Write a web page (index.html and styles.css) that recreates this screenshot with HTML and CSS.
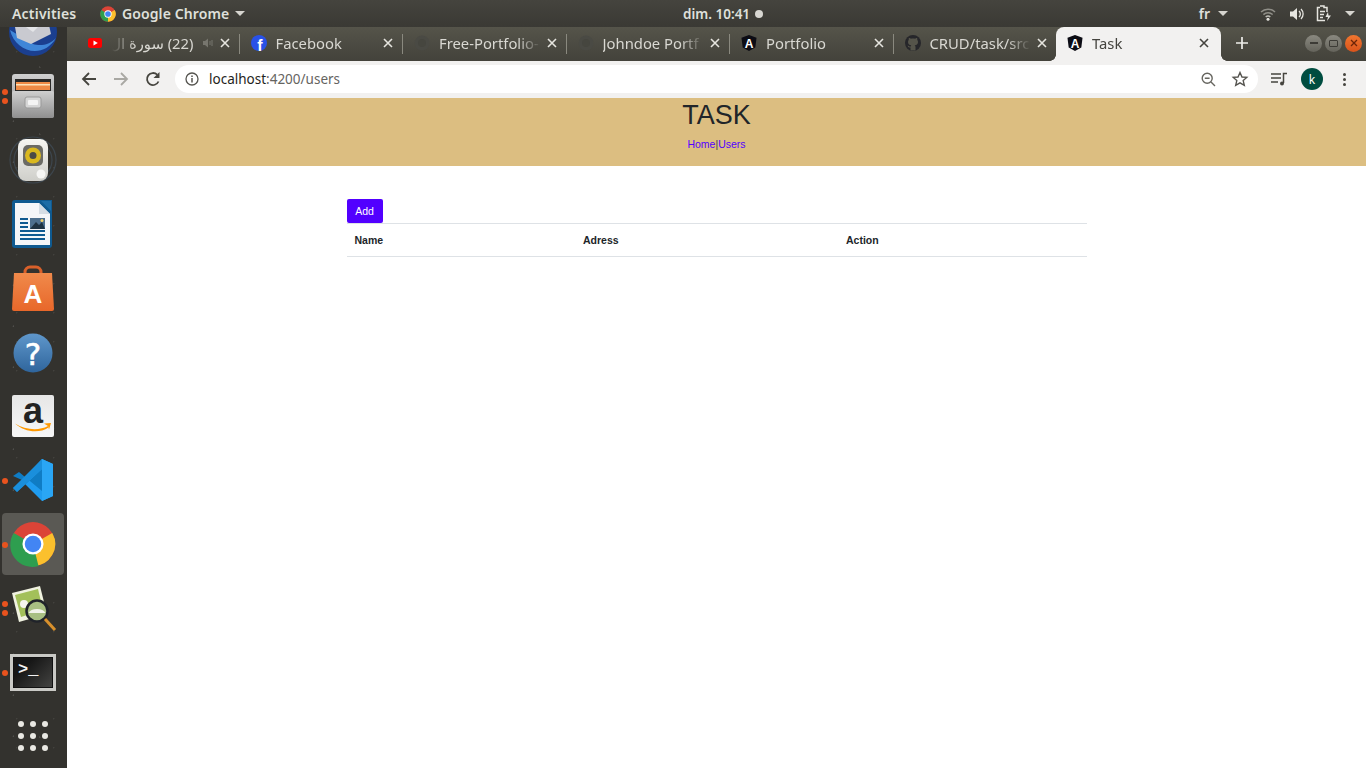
FILE: index.html
```html
<!DOCTYPE html>
<html lang="en">
<head>
  <meta charset="UTF-8">
  <title>Task</title>
  <link rel="stylesheet" href="styles.css">
</head>
<body>
  <svg class="defs" width="0" height="0">
    <defs>
      <linearGradient id="g-cabinet" x1="0" y1="0" x2="0" y2="1">
        <stop offset="0" stop-color="#cfcfcf"/><stop offset="1" stop-color="#8f8f8f"/>
      </linearGradient>
      <linearGradient id="g-bag" x1="0" y1="0" x2="0" y2="1">
        <stop offset="0" stop-color="#f08a4b"/><stop offset="1" stop-color="#e8672a"/>
      </linearGradient>
      <linearGradient id="g-help" x1="0" y1="0" x2="0" y2="1">
        <stop offset="0" stop-color="#5f97cb"/><stop offset="1" stop-color="#2f659c"/>
      </linearGradient>
      <linearGradient id="g-amz" x1="0" y1="0" x2="0" y2="1">
        <stop offset="0" stop-color="#e6e6e6"/><stop offset="1" stop-color="#f7f7f7"/>
      </linearGradient>
      <linearGradient id="g-speaker" x1="0" y1="0" x2="0" y2="1">
        <stop offset="0" stop-color="#f6f6f2"/><stop offset="1" stop-color="#cfcfca"/>
      </linearGradient>
    </defs>
    <symbol id="close" viewBox="0 0 10 10">
      <path d="M1 1 9 9M9 1 1 9" stroke="currentColor" stroke-width="1.6" fill="none"/>
    </symbol>
    <symbol id="blank" viewBox="0 0 16 16">
      <circle cx="8" cy="8" r="7.500" fill="#4a4a44"/>
      <circle cx="8" cy="8" r="4" fill="#46463f"/>
    </symbol>
  </svg>

  <header class="topbar">
    <div class="topbar-left">
      <span class="activities">Activities</span>
      <span class="app-menu">
        <svg width="16" height="16" viewBox="0 0 48 48">
          <circle cx="24" cy="24" r="23" fill="#db4437"/>
          <path d="M24 24 44 12A23 23 0 0 1 24 47Z" fill="#fbc02d"/>
          <path d="M24 24 24 47A23 23 0 0 1 4 12Z" fill="#2e9e4f"/>
          <circle cx="24" cy="24" r="11" fill="#fff"/>
          <circle cx="24" cy="24" r="8.5" fill="#4285f4"/>
        </svg>
        Google Chrome
        <i class="caret"></i>
      </span>
    </div>
    <div class="clock">dim. 10:41 <i class="clock-dot"></i></div>
    <div class="topbar-right">
      <span class="lang">fr <i class="caret"></i></span>
      <svg class="wifi" width="16" height="14" viewBox="0 0 16 14" fill="none" stroke="#8f8e87" stroke-width="1.5">
        <path d="M1 5a10 10 0 0 1 14 0M3.4 7.6a6.6 6.6 0 0 1 9.2 0"/>
        <path d="M5.7 10a3.4 3.4 0 0 1 4.6 0" stroke="#bdbcb5"/>
        <circle cx="8" cy="12.2" r="1.5" fill="#e6e5e0" stroke="none"/>
      </svg>
      <svg class="vol" width="16" height="14" viewBox="0 0 16 14" fill="none">
        <path d="M1 4.5H4L8 1V13L4 9.5H1Z" fill="#e6e5e0"/>
        <path d="M10 4a4 4 0 0 1 0 6M12 2a7 7 0 0 1 0 10" stroke="#e6e5e0" stroke-width="1.3"/>
      </svg>
      <svg class="batt" width="16" height="17" viewBox="0 0 16 17" fill="none">
        <path d="M4 1H8V2.5H11V7M9 15.5H1.5V2.5H4" stroke="#e6e5e0" stroke-width="1.5"/>
        <path d="M4 6.5H9M4 9.5H8M4 12.5H7" stroke="#e6e5e0" stroke-width="1.3"/>
        <path d="M12 7 9.5 12H12L11 16 15 10.5H12.5Z" fill="#e6e5e0"/>
      </svg>
      <i class="caret"></i>
    </div>
  </header>

  <div class="desktop">
    <nav class="dock">
      <div class="dock-item">
        <svg width="48" height="48" viewBox="0 0 48 48">
          <circle cx="24" cy="24" r="24" fill="#1b3f8f"/>
          <path d="M1 22C6 44 34 52 47 30 40 38 30 38 24 36Z" fill="#3f86d8"/>
          <path d="M4 8H38L42 26 22 36 8 30Z" fill="#c9cad0"/>
          <path d="M4 10 24 24 38 10Z" fill="#e4e5e8"/>
        </svg>
      </div>
      <div class="dock-item">
        <i class="pip pip-a"></i><i class="pip pip-b"></i>
        <svg width="44" height="44" viewBox="0 0 44 44">
          <rect x="1" y="0" width="42" height="44" rx="3" fill="url(#g-cabinet)"/>
          <rect x="4" y="5" width="36" height="13" fill="#2b2a28"/>
          <rect x="5" y="8" width="34" height="8" fill="#ee8a45"/>
          <rect x="5" y="10" width="34" height="1.500" fill="#fde1b8"/>
          <rect x="1" y="17" width="42" height="27" rx="2" fill="url(#g-cabinet)"/>
          <rect x="14" y="23" width="16" height="11" rx="2" fill="#d6d6d6" stroke="#9a9a9a"/>
          <rect x="17" y="26" width="10" height="5" rx="1" fill="#f4f4f4"/>
        </svg>
      </div>
      <div class="dock-item">
        <svg width="48" height="48" viewBox="0 0 48 48">
          <g fill="none" stroke="#4f6e8a" stroke-opacity=".35" stroke-width="1.200">
            <circle cx="24" cy="24" r="23"/><circle cx="24" cy="24" r="19"/>
          </g>
          <rect x="9" y="3" width="30" height="42" rx="8" fill="url(#g-speaker)"/>
          <rect x="14" y="9" width="20" height="21" rx="5" fill="#6b6b65"/>
          <circle cx="24" cy="19.500" r="8" fill="#d9b81f"/>
          <circle cx="24" cy="19.500" r="3.500" fill="#4a4a46"/>
          <circle cx="32" cy="38" r="4.500" fill="#f6f6f4"/>
        </svg>
      </div>
      <div class="dock-item">
        <svg width="42" height="48" viewBox="0 0 42 48">
          <path d="M3 0H40V45A3 3 0 0 1 37 48H3A3 3 0 0 1 0 45V3A3 3 0 0 1 3 0Z" fill="#0f5a90"/>
          <path d="M3 3H27L38 14V45H3Z" fill="#f4f6f8"/>
          <path d="M29 1 39 1V11Z" fill="#1d6da6"/>
          <path d="M27 3 38 14H27Z" fill="#d5dde4"/>
          <path d="M8 19h8M8 23h8M8 27h8M8 31h25M8 35h25M8 39h25" stroke="#0f5a90" stroke-width="2"/>
          <rect x="18" y="18" width="15" height="11" fill="#4d6f8d"/>
          <path d="M18 29 24 22 27 25 30 22 33 29Z" fill="#1f3342"/>
          <circle cx="30" cy="20.500" r="1.500" fill="#f2d16b"/>
        </svg>
      </div>
      <div class="dock-item">
        <svg width="44" height="46" viewBox="0 0 44 46">
          <path d="M14 12V7A5 5 0 0 1 19 2H25A5 5 0 0 1 30 7V12" fill="none" stroke="#d9602a" stroke-width="3"/>
          <path d="M3 8H41L43 44A2 2 0 0 1 41 46H3A2 2 0 0 1 1 44Z" fill="url(#g-bag)"/>
          <text x="22" y="38" text-anchor="middle" class="bag-letter">A</text>
        </svg>
      </div>
      <div class="dock-item">
        <svg class="help-ico" width="40" height="40" viewBox="0 0 40 40">
          <circle cx="20" cy="20" r="19.500" fill="url(#g-help)"/>
          <text x="20" y="31.500" text-anchor="middle" class="help-mark">?</text>
        </svg>
      </div>
      <div class="dock-item">
        <svg width="42" height="42" viewBox="0 0 42 42">
          <rect width="42" height="42" rx="2" fill="url(#g-amz)"/>
          <text x="21" y="28" text-anchor="middle" class="amz-letter">a</text>
          <path d="M3 28.500C13 35 27 36 36 31L36.500 32.500C27 39 12 37 3 28.500Z" fill="#f90"/>
          <path d="M32 28.500 39 28 37 34.500 36 31Z" fill="#f90"/>
        </svg>
      </div>
      <div class="dock-item">
        <i class="pip"></i>
        <svg width="42" height="42" viewBox="0 0 42 42">
          <path d="M30 0 41 5V37L30 42 10 22Z" fill="#1f9cf0"/>
          <path d="M30 0 30 42 41 37V5Z" fill="#2aa6f5"/>
          <path d="M30 10 30 32 7 13 1 17 10 21 1 29 5 33 30 10Z" fill="#0f7cc4"/>
          <path d="M30 0 30 10 5 33 1 29Z" fill="#1a8fdc"/>
        </svg>
      </div>
      <div class="dock-item is-active">
        <i class="pip"></i>
        <svg width="44" height="44" viewBox="0 0 48 48">
          <circle cx="24" cy="24" r="24" fill="#db4437"/>
          <path d="M24 24 45 12A24 24 0 0 1 24 48Z" fill="#fbc02d"/>
          <path d="M24 24 30 48A24 24 0 0 1 3 12Z" fill="#2e9e4f"/>
          <circle cx="24" cy="24" r="11.500" fill="#fff"/>
          <circle cx="24" cy="24" r="9" fill="#4285f4"/>
        </svg>
      </div>
      <div class="dock-item">
        <i class="pip pip-a"></i><i class="pip pip-b"></i>
        <svg width="46" height="46" viewBox="0 0 46 46">
          <path d="M2 8 30 1 37 29 9 37Z" fill="#f0f2e0"/>
          <path d="M5 10 28 4 33 25 11 32Z" fill="#a3c05a"/>
          <circle cx="14" cy="19" r="4" fill="#f5f5ee"/>
          <circle cx="27" cy="26" r="10.500" fill="#a8bf82" stroke="#20232a" stroke-width="2.500"/>
          <path d="M18.500 28a9 6 0 0 1 17 0Z" fill="#f2f3ea"/>
          <path d="M35 34 45 45" stroke="#d8902c" stroke-width="3"/>
        </svg>
      </div>
      <div class="dock-item">
        <i class="pip"></i>
        <div class="term-icon"><span class="term-prompt">&gt;_</span></div>
      </div>
      <div class="dock-item">
        <div class="apps-grid">
          <i></i><i></i><i></i><i></i><i></i><i></i><i></i><i></i><i></i>
        </div>
      </div>
    </nav>

    <div class="browser">
      <div class="tabstrip">
        <div class="tab">
          <svg class="fav" width="16" height="16" viewBox="0 0 16 16">
            <rect x="1" y="3" width="14" height="10" rx="2.500" fill="#f00"/>
            <path d="M6.500 5.500V10.500L10.800 8Z" fill="#fff"/>
          </svg>
          <span class="tab-title tab-title-rtl" dir="rtl">(22) سورة ال</span>
          <svg class="speaker" width="12" height="12" viewBox="0 0 12 12" fill="#77766e">
            <path d="M1 4H3L6 1.500V10.500L3 8H1Z"/><path d="M7.500 4v4h1V4ZM9.500 3v6h1V3Z"/>
          </svg>
          <svg class="tab-x" width="10" height="10"><use href="#close"/></svg>
        </div>
        <div class="tab">
          <svg class="fav" width="16" height="16" viewBox="0 0 16 16">
            <circle cx="8" cy="8" r="8" fill="#2851e8"/>
            <text x="8.800" y="16" text-anchor="middle" class="fb-letter">f</text>
          </svg>
          <span class="tab-title">Facebook</span>
          <svg class="tab-x" width="10" height="10"><use href="#close"/></svg>
        </div>
        <div class="tab">
          <svg class="fav" width="16" height="16"><use href="#blank"/></svg>
          <span class="tab-title">Free-Portfolio-</span>
          <svg class="tab-x" width="10" height="10"><use href="#close"/></svg>
        </div>
        <div class="tab">
          <svg class="fav" width="16" height="16"><use href="#blank"/></svg>
          <span class="tab-title">Johndoe Portf</span>
          <svg class="tab-x" width="10" height="10"><use href="#close"/></svg>
        </div>
        <div class="tab">
          <svg class="fav" width="16" height="16" viewBox="0 0 16 16">
            <path d="M8 0 15.5 2.7 14.3 12.5 8 16 1.7 12.5.5 2.7Z" fill="#0c0c14"/>
            <text x="8" y="12.600" text-anchor="middle" class="ng-letter">A</text>
          </svg>
          <span class="tab-title">Portfolio</span>
          <svg class="tab-x" width="10" height="10"><use href="#close"/></svg>
        </div>
        <div class="tab">
          <svg class="fav" width="16" height="16" viewBox="0 0 16 16">
            <circle cx="8" cy="8" r="8" fill="#26262a"/>
            <path d="M5.500 15.500V12.500C3 13 3 11 2.500 10.500 4 10.500 4 12 5.800 11.500 5.800 11 6 10.500 6.300 10.300 4 10 3 8.800 3 7 3 6 3.400 5.300 3.800 4.800 3.600 4.300 3.600 3.500 3.900 2.900 4.800 2.900 5.500 3.400 5.900 3.700 7.200 3.400 8.800 3.400 10.100 3.700 10.500 3.400 11.200 2.900 12.100 2.900 12.400 3.500 12.400 4.300 12.200 4.800 12.600 5.300 13 6 13 7 13 8.800 12 10 9.700 10.300 10.200 10.700 10.500 11.300 10.500 12V15.500Z" fill="#55544a"/>
          </svg>
          <span class="tab-title">CRUD/task/src</span>
          <svg class="tab-x" width="10" height="10"><use href="#close"/></svg>
        </div>
        <div class="tab tab-active">
          <svg class="fav" width="16" height="16" viewBox="0 0 16 16">
            <path d="M8 0 15.5 2.7 14.3 12.5 8 16 1.7 12.5.5 2.7Z" fill="#0c0c14"/>
            <text x="8" y="12.600" text-anchor="middle" class="ng-letter">A</text>
          </svg>
          <span class="tab-title">Task</span>
          <svg class="tab-x" width="10" height="10"><use href="#close"/></svg>
        </div>
        <svg class="new-tab" width="12" height="12" viewBox="0 0 12 12">
          <path d="M6 0V12M0 6H12" stroke="#eeeeea" stroke-width="1.700"/>
        </svg>
        <div class="win-btns">
          <span class="win-btn"><i class="win-min"></i></span>
          <span class="win-btn"><i class="win-max"></i></span>
          <span class="win-btn win-close">
            <svg width="8" height="8" viewBox="0 0 8 8"><path d="M1 1 7 7M7 1 1 7" stroke="#6b2409" stroke-width="1.300"/></svg>
          </span>
        </div>
      </div>

      <div class="toolbar">
        <svg class="tool-ico" width="16" height="16" viewBox="0 0 16 16" fill="none" stroke="#46453f" stroke-width="1.800">
          <path d="M15 8H2M8 2 2 8 8 14"/>
        </svg>
        <svg class="tool-ico" width="16" height="16" viewBox="0 0 16 16" fill="none" stroke="#a9a8a3" stroke-width="1.800">
          <path d="M1 8H14M8 2 14 8 8 14"/>
        </svg>
        <svg class="tool-ico" width="16" height="16" viewBox="0 0 16 16" fill="none">
          <path d="M13.500 10.500A6 6 0 1 1 12.200 3.700" stroke="#46453f" stroke-width="1.800"/>
          <path d="M14.500 1V7H8.500Z" fill="#46453f"/>
        </svg>
        <div class="omnibox">
          <svg class="info" width="14" height="14" viewBox="0 0 14 14" fill="none">
            <circle cx="7" cy="7" r="6" stroke="#55544f" stroke-width="1.300"/>
            <path d="M7 6V10.500M7 3.500V5" stroke="#55544f" stroke-width="1.500"/>
          </svg>
          <span class="url">localhost<span class="url-path">:4200/users</span></span>
          <svg class="zoom-ico" width="15" height="15" viewBox="0 0 15 15" fill="none" stroke="#66655f" stroke-width="1.400">
            <circle cx="6.200" cy="6.200" r="5"/><path d="M10 10 14 14M3.800 6.200H8.600"/>
          </svg>
          <svg class="star-ico" width="16" height="16" viewBox="0 0 16 16" fill="none" stroke="#55544f" stroke-width="1.400">
            <path d="M8 1.500 10 6 14.800 6.400 11.200 9.600 12.300 14.400 8 11.800 3.700 14.400 4.800 9.600 1.200 6.400 6 6Z"/>
          </svg>
        </div>
        <svg class="queue-ico" width="16" height="14" viewBox="0 0 16 14" fill="none" stroke="#46453f" stroke-width="1.500">
          <path d="M0 2H10M0 6H10M0 10H7"/>
          <path d="M12.500 11V1.500H16" />
          <circle cx="11" cy="11.500" r="2" fill="#46453f" stroke="none"/>
        </svg>
        <span class="avatar">k</span>
        <span class="kebab"><i></i><i></i><i></i></span>
      </div>

      <main class="page">
        <div class="banner">
          <h1 class="banner-title">TASK</h1>
          <p class="banner-links"><a href="#">Home</a>|<a href="#">Users</a></p>
        </div>
        <section class="users">
          <button class="add-btn" type="button">Add</button>
          <table class="users-table">
            <thead>
              <tr>
                <th class="col-name">Name</th>
                <th class="col-adress">Adress</th>
                <th>Action</th>
              </tr>
            </thead>
          </table>
        </section>
      </main>
    </div>
  </div>
</body>
</html>
```

FILE: styles.css
```css
* {
  box-sizing: border-box;
}
html, body {
  height: 100%;
}
body {
  margin: 0;
  overflow: hidden;
  display: flex;
  flex-direction: column;
  font-family: "Liberation Sans", Arial, sans-serif;
  background: #fff;
}
.defs {
  position: absolute;
}
svg {
  overflow: visible;
}
.ng-letter {
  font: bold 12px "Liberation Sans", sans-serif;
  fill: #fff;
}
.fb-letter {
  font: bold 16px "Liberation Sans", sans-serif;
  fill: #fff;
}
.bag-letter {
  font: bold 26px "Liberation Sans", sans-serif;
  fill: #fff;
}
.help-mark {
  font: 31px "DejaVu Sans", sans-serif;
  fill: #fff;
  stroke: #fff;
  stroke-width: .6px;
}
.amz-letter {
  font: bold 36px "Liberation Sans", sans-serif;
  fill: #222;
}

/* gnome top bar */
.topbar {
  height: 27px;
  flex: none;
  display: grid;
  grid-template-columns: 683px auto 1fr;
  align-items: center;
  background: linear-gradient(#45443e, #3a3934);
  color: #dfe0db;
  font-family: "Noto Sans", sans-serif;
  font-size: 14px;
  font-weight: 600;
}
.topbar-left {
  display: flex;
  align-items: center;
  padding-left: 12px;
}
.activities {
  width: 88px;
  letter-spacing: .2px;
}
.app-menu {
  display: flex;
  align-items: center;
  gap: 6px;
  letter-spacing: .1px;
}
.caret {
  display: inline-block;
  width: 0;
  height: 0;
  border-left: 5px solid transparent;
  border-right: 5px solid transparent;
  border-top: 5px solid #d6d5cf;
}
.clock {
  display: flex;
  align-items: center;
  gap: 5px;
  font-size: 13.500px;
}
.clock-dot {
  width: 8px;
  height: 8px;
  border-radius: 50%;
  background: #d8d7d2;
}
.topbar-right {
  display: flex;
  align-items: center;
  justify-content: flex-end;
  padding-right: 11px;
}
.lang {
  display: flex;
  align-items: center;
  gap: 8px;
  margin-right: 32px;
}
.wifi {
  margin-right: 13px;
}
.vol {
  margin-right: 11px;
}
.batt {
  margin-right: 13px;
}

.desktop {
  flex: 1;
  display: flex;
  min-height: 0;
}

/* launcher */
.dock {
  width: 67px;
  flex: none;
  display: flex;
  flex-direction: column;
  overflow: hidden;
  background-color: #33322e;
  background-image:
    radial-gradient(circle at 20% 30%, rgba(255,255,255,.14) .7px, transparent 1px),
    radial-gradient(circle at 75% 60%, rgba(255,255,255,.1) .7px, transparent 1px),
    radial-gradient(circle at 45% 85%, rgba(255,255,255,.08) .7px, transparent 1px);
  background-size: 67px 41px, 53px 67px, 37px 29px;
}
.dock-item {
  position: relative;
  width: 62px;
  height: 62px;
  margin: 1px 0 1px 2px;
  flex: none;
  display: flex;
  align-items: center;
  justify-content: center;
  border-radius: 4px;
}
.dock-item:first-child {
  margin-top: -26px;
}
.is-active {
  background: #5a5954;
}
.help-ico {
  margin-top: 2px;
}
.pip {
  position: absolute;
  left: 0;
  top: 28.500px;
  width: 6px;
  height: 6px;
  border-radius: 50%;
  background: #e9531e;
}
.pip-a {
  top: 24px;
}
.pip-b {
  top: 33px;
}
.term-icon {
  width: 46px;
  height: 37px;
  padding: 2px 5px;
  border: 3px solid #c9c9c5;
  background: linear-gradient(135deg, #161616 30%, #454543);
  box-shadow: inset 0 0 0 1px #111;
}
.term-prompt {
  display: block;
  color: #f2f2f2;
  font: bold 17px/22px "Liberation Mono", monospace;
}
.apps-grid {
  display: grid;
  grid-template-columns: repeat(3, 6px);
  gap: 6px;
}
.apps-grid i {
  width: 6px;
  height: 6px;
  border-radius: 50%;
  background: #e9e8e3;
}

.browser {
  flex: 1;
  min-width: 0;
  display: flex;
  flex-direction: column;
}

/* chrome tabs */
.tabstrip {
  height: 34px;
  flex: none;
  display: flex;
  align-items: stretch;
  padding-left: 9px;
  background: linear-gradient(#55544a, #43423b);
  color: #d9d8d2;
  font-family: "Noto Sans", "DejaVu Sans", sans-serif;
  font-size: 14.800px;
}
.tab {
  position: relative;
  width: 163.500px;
  flex: none;
  display: flex;
  align-items: center;
  padding: 0 10px 2px 11px;
}
.tab::after {
  content: "";
  position: absolute;
  right: 0;
  top: 7px;
  bottom: 7px;
  width: 1px;
  background: #8a897f;
}
.fav {
  flex: none;
  margin-right: 9px;
}
.tab-title {
  flex: 1;
  min-width: 0;
  white-space: nowrap;
  -webkit-mask-image: linear-gradient(to right, #000 calc(100% - 24px), transparent);
  mask-image: linear-gradient(to right, #000 calc(100% - 24px), transparent);
}
.tab-title-rtl {
  -webkit-mask-image: linear-gradient(to left, #000 calc(100% - 24px), transparent);
  mask-image: linear-gradient(to left, #000 calc(100% - 24px), transparent);
}
.speaker {
  flex: none;
  margin-left: 8px;
}
.tab-x {
  flex: none;
  margin-left: 6px;
  color: #e6e5df;
}
.tab-active {
  width: 165px;
  margin-left: -1px;
  padding-right: 12px;
  background: #f2f1f0;
  color: #45443f;
  border-radius: 8px 8px 0 0;
}
/* flared bottom corners of the open tab */
.tab-active::before,
.tab-active::after {
  content: "";
  position: absolute;
  top: auto;
  bottom: 0;
  width: 6px;
  height: 6px;
}
.tab-active::before {
  left: -6px;
  background: radial-gradient(circle at 0 0, transparent 5.500px, #f2f1f0 6px);
}
.tab-active::after {
  right: -6px;
  background: radial-gradient(circle at 100% 0, transparent 5.500px, #f2f1f0 6px);
}
.tab-active .tab-x {
  color: #45443f;
}
.new-tab {
  flex: none;
  align-self: center;
  margin: 0 0 2px 15px;
}
.win-btns {
  margin-left: auto;
  display: flex;
  align-items: center;
  gap: 3px;
  padding: 0 4px 2px 0;
}
.win-btn {
  width: 17px;
  height: 17px;
  display: flex;
  align-items: center;
  justify-content: center;
  border-radius: 50%;
  background: linear-gradient(#8a8980, #64635b);
}
.win-min {
  width: 8px;
  height: 2px;
  background: #3c3b36;
}
.win-max {
  width: 9px;
  height: 7px;
  border: 1px solid #3c3b36;
  border-radius: 1px;
}
.win-close {
  background: linear-gradient(#f0762f, #d9531b);
}

/* toolbar */
.toolbar {
  height: 37px;
  flex: none;
  display: flex;
  align-items: center;
  padding: 0 0 1px 14px;
  background: #f2f1f0;
}
.tool-ico {
  flex: none;
  margin-right: 16px;
}
.tool-ico:nth-child(3) {
  margin-right: 14px;
}
.omnibox {
  width: 1083px;
  height: 28px;
  flex: none;
  display: flex;
  align-items: center;
  padding: 0 10px;
  border-radius: 14px;
  background: #fff;
}
.info {
  flex: none;
  margin-right: 10px;
}
.url {
  flex: 1;
  color: #1f1f1c;
  font-family: "Noto Sans", sans-serif;
  font-size: 13.500px;
}
.url-path {
  color: #65645f;
}
.zoom-ico {
  margin-right: 16px;
}
.queue-ico {
  flex: none;
  margin-left: 13px;
}
.avatar {
  width: 22px;
  height: 22px;
  flex: none;
  margin-left: 14px;
  display: flex;
  align-items: center;
  justify-content: center;
  border-radius: 50%;
  background: #004d40;
  color: #fff;
  font-family: "Noto Sans", sans-serif;
  font-size: 12px;
}
.kebab {
  display: flex;
  flex-direction: column;
  gap: 2px;
  margin-left: 20px;
}
.kebab i {
  width: 3px;
  height: 3px;
  border-radius: 50%;
  background: #46453f;
}

/* the app itself */
.page {
  flex: 1;
  background: #fff;
}
.banner {
  height: 68px;
  padding-top: 1px;
  background: #dcbe81;
  text-align: center;
}
.banner-title {
  margin: 0;
  color: #212529;
  font-size: 27px;
  font-weight: 400;
  line-height: 32px;
}
.banner-links {
  margin: 6px 0 0;
  color: #444;
  font-size: 10.500px;
  line-height: 14px;
}
.banner-links a {
  color: #5200ff;
  text-decoration: none;
}
.users {
  width: 740px;
  margin: 33px auto 0 280px;
}
.add-btn {
  display: block;
  width: 36px;
  height: 24px;
  padding: 0 1px 0 0;
  border: 0;
  border-radius: 2px;
  background: #5200ff;
  color: #fff;
  font-family: inherit;
  font-size: 10.500px;
}
.users-table {
  width: 100%;
  border-collapse: collapse;
  color: #212529;
  font-size: 10.500px;
}
.users-table th {
  height: 33px;
  padding: 0 7.500px;
  border-top: 1px solid #dee2e6;
  border-bottom: 1px solid #dee2e6;
  text-align: left;
}
.col-name {
  width: 228.500px;
}
.col-adress {
  width: 263px;
}
```
